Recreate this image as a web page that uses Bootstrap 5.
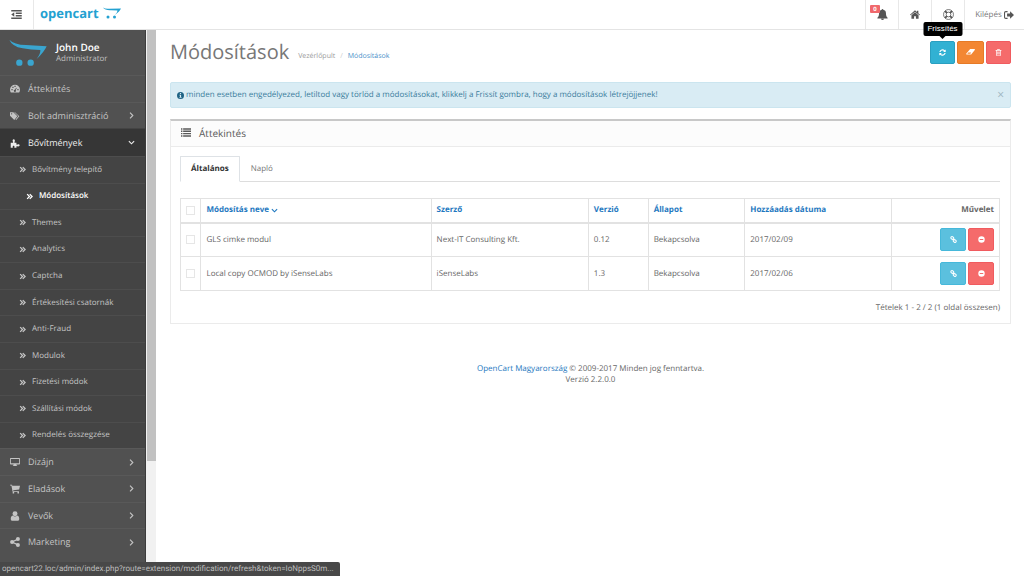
<!DOCTYPE html>
<html lang="hu">
<head>
<meta charset="utf-8">
<meta name="viewport" content="width=device-width, initial-scale=1">
<title>Módosítások</title>
<link href="https://cdn.jsdelivr.net/npm/bootstrap@5.3.0/dist/css/bootstrap.min.css" rel="stylesheet">
<style>
body{font:8px/12px "Open Sans",sans-serif;color:#666;background:#fff;text-rendering:geometricPrecision}
a{text-decoration:none;color:#1e78c0}
svg{fill:currentColor;flex:none}
.ico{width:10px;height:10px}
.ico-sm{width:7px;height:7px}
.topbar{height:30px;border-bottom:1px solid #e4e4e4}
.topbar .cell{display:flex;align-items:center;justify-content:center;color:#555;border:0 solid #e8e8e8;background:none;padding:0}
.toggle-btn{width:34px;border-right-width:1px!important}
.icon-cell{width:33px;border-left-width:1px!important;position:relative}
.exit-cell{width:60px;border-left-width:1px!important;gap:2px;color:#777!important}
.exit-cell svg{color:#555}
.brand{font-size:13px;line-height:16px;font-weight:700;color:#23a1d1;padding:0 0 3px 6px}
.count{position:absolute;left:4px;top:5px;width:10px;height:8px;font-size:6px;line-height:8px;font-weight:700;background:#f0686c;color:#fff;border-radius:1px;text-align:center}
.shell{height:calc(100vh - 30px)}
.side{width:146px;background:#515151;color:#c4c4c4;border-right:1px solid #3c3c3c}
.side a{color:inherit}
.profile{height:45px;padding:0 10px 0 9px;gap:8px}
.profile svg{color:#3aa5cf}
.profile strong{display:block;font-size:10px;line-height:13px;font-weight:600;color:#fff}
.profile small{display:block;font-size:8px;line-height:10px;color:#c0c0c0}
.menu{padding-bottom:21px}
.menu ul,.menu{list-style:none;margin:0;padding-left:0}
.menu li{flex:1 1 0}
.menu li.group-open{flex:12 1 0}
.menu .subs{flex:11 1 0;background:#444}
.menu a{display:flex;align-items:center;height:100%;font-size:9px;border-top:1px solid #595959;padding:0 10px}
.menu a .ico{margin-right:8px}
.menu a .arrow{margin-left:auto}
.menu .group-open>a{flex:1 1 0;height:auto;background:#363636;color:#eee;border-color:#444}
.menu .subs a{font-size:8px;padding-left:19px;gap:6px;border-color:#4d4d4d}
.menu .subs a.current{color:#fff;font-weight:600;padding-left:26px}
.track{width:10px;background:#f1f1f1;border-left:1px solid #f1f1f1}
.thumb{height:79%;background:#c1c1c1}
.page{padding:9px 13px 0 14px}
.title{font-size:20px;line-height:26px;color:#777;font-weight:400;margin:0}
.crumbs{margin:0 0 0 9px;padding-top:9px;--bs-breadcrumb-item-padding-x:5px;--bs-breadcrumb-divider-color:#ccc;font-size:7px}
.crumbs a{color:#999}
.crumbs .now a{color:#4a8fc9}
.btn-row{gap:2px}
.sq{width:26px;height:23px;padding:0;display:inline-flex;align-items:center;justify-content:center;border-radius:2px;color:#fff;position:relative}
.btn-row.tools .sq{width:25px}
.sq:hover{color:#fff}
.b-refresh{background:#31b1d3;border-color:#2a9fc0}
.btn-row .sq.b-clear{background:#f38733;border-color:#e67a26;width:27px}
.b-del{background:#f56b6b;border-color:#f05b5f}
.b-link{background:#5bc0de;border-color:#46b8da}
.tip{position:absolute;bottom:27px;left:50%;transform:translateX(-50%);width:39px;height:14px;background:#000;border-radius:2px;font:8px/14px "Liberation Sans",sans-serif;color:#fff}
.tip::after{content:"";position:absolute;top:14px;left:16px;border:3px solid transparent;border-top-color:#000}
.note{margin:17px 0 11px;padding:0 6px;height:26px;background:#d9ecf4;border:1px solid #cbe5ef;border-radius:2px;color:#3a7c9c;gap:2px}
.note svg{color:#1f6384}
.note button{background:none;border:0;padding:0;color:#9db4bf;font-size:12px;line-height:12px}
.panel{border:1px solid #ebebeb;border-top:2px solid #c8c8c8}
.panel-top{height:26px;background:#fcfcfc;border-bottom:1px solid #ebebeb;padding:0 10px 2px;gap:8px;font-size:10px;color:#595959}
.panel-in{padding:9px 10px 9px 9px}
.nav-tabs{--bs-nav-link-padding-x:10px;--bs-nav-link-padding-y:6px;--bs-nav-tabs-border-color:#ddd;--bs-nav-tabs-border-radius:1px;margin-bottom:16px}
.nav-tabs .nav-link{font-size:8px;color:#777}
.nav-tabs .nav-link.active{font-weight:700;color:#333}
.grid-tbl{table-layout:fixed;margin:0 0 11px;color:#666;border-color:#e2e2e2;--bs-table-color:#666}
.grid-tbl>:not(caption)>*>*{padding:0 5px;height:34px;vertical-align:middle}
.grid-tbl>thead>tr>th{height:24px;border-bottom-width:2px}
.grid-tbl td.pick,.grid-tbl th.pick{padding:0!important;text-align:center}
.pick input{appearance:none;width:9px;height:9px;border:1px solid #e6e6e6;background:#fff;display:block;margin:0 auto}
.c1{width:2.5%}.c2{width:28.1%}.c3{width:19.2%}.c4{width:7.3%}.c5{width:11.8%}.c6{width:17.9%}.c7{width:13.2%}
.foot{margin-top:39px;line-height:11px}
.status{position:fixed;left:0;bottom:0;width:340px;height:14px;background:#484848;color:#bdbdbd;border-radius:0 2px 0 0;font-family:Roboto,sans-serif;line-height:14px;padding-left:2px;white-space:nowrap}
</style>
</head>
<body>
<svg class="d-none" aria-hidden="true">
<symbol id="outdent" viewBox="0 0 14 12"><path d="M0 0h14v2H0zM6 3.300h8v2H6zM6 6.700h8v2H6zM0 10h14v2H0zM0 6l4-3v6z"/></symbol>
<symbol id="bell" viewBox="0 0 14 14"><path d="M7 0a1 1 0 0 1 1 1.100c2 .4 3.400 2 3.400 4.200 0 3 .7 4.700 2.100 5.700v1H.5v-1c1.400-1 2.100-2.700 2.100-5.700C2.600 3.100 4 1.500 6 1.100A1 1 0 0 1 7 0zM5.200 12.500h3.600a1.800 1.500 0 0 1-3.600 0z"/></symbol>
<symbol id="home" viewBox="0 0 14 12"><path d="M7 0 9.700 2.400V.8h2v3.400L14 6.200l-.8 1L7 2 .8 7.200l-.8-1zM7 3l5 4.200V12H8.300V8.300H5.700V12H2V7.200z"/></symbol>
<symbol id="ring" viewBox="0 0 14 14"><g fill="none" stroke="currentColor"><circle cx="7" cy="7" r="6.300"/><circle cx="7" cy="7" r="3"/><path stroke-width="2.400" d="M2.600 2.600 5 5M9 9l2.400 2.400M11.400 2.600 9 5M5 9l-2.400 2.400"/></g></symbol>
<symbol id="exit" viewBox="0 0 14 12"><path d="M5 .5H2.500A2.500 2.500 0 0 0 0 3v6a2.500 2.500 0 0 0 2.500 2.500H5V10H2.500a1 1 0 0 1-1-1V3a1 1 0 0 1 1-1H5zM14 6 8.500.8v3H4.300v4.400h4.200v3z"/></symbol>
<symbol id="dash" viewBox="0 0 14 12"><path fill-rule="evenodd" d="M7 0a7 7 0 0 1 7 7c0 1.600-.4 2.900-1.200 4H1.200A7 7 0 0 1 0 7a7 7 0 0 1 7-7zM2 6v1.700h1.700V6zM3.300 3v1.700H5V3zM6.200 1.500v1.700h1.700V1.500zM10.300 6v1.700H12V6zM8.700 4.200 6.700 7a1.500 1.500 0 1 0 1.200.4l1.700-2.800z"/></symbol>
<symbol id="tags" viewBox="0 0 15 13"><path fill-rule="evenodd" d="M0 1h5l6 6-4.600 5.500L0 6zM2.400 2.200a1 1 0 1 0 .1 2 1 1 0 0 0-.1-2z"/><path d="M6.300 1h1.200l6.500 6-4.700 5.500-1-.8L12.500 7z"/></symbol>
<symbol id="puzzle" viewBox="0 0 14 13"><path d="M1 6h3c.6 0 .4-.8.100-1.300C3.200 3 3.800 1.300 5.200 1.300S7.300 3 6.500 4.600C6.200 5.200 6 6 6.700 6H9v2.300c0 .8.800.6 1.500.3 1.600-.8 3 0 3 1.200s-1.400 2.200-3 1.400c-.8-.4-1.500-.3-1.500.4V13H6.500c-.7 0-.5-.8-.3-1.300.2-.9-.4-1.400-1.200-1.400s-1.300.5-1.100 1.400c.2.500.3 1.300-.4 1.300H1z"/></symbol>
<symbol id="screen" viewBox="0 0 14 12"><path fill-rule="evenodd" d="M1 .5h12a1 1 0 0 1 1 1v7a1 1 0 0 1-1 1H9v1l1 .5v.7H4V11l1-.5v-1H1a1 1 0 0 1-1-1v-7a1 1 0 0 1 1-1zM1.200 1.700v6.100h11.600V1.700z"/></symbol>
<symbol id="basket" viewBox="0 0 14 13"><path d="M0 .5h2.800L3.200 2H14l-1.200 5.200-8.300 1 .2 1H12.500v1.100H3.600L2 1.700H0z"/><circle cx="4.800" cy="11.700" r="1.200"/><circle cx="11.500" cy="11.700" r="1.200"/></symbol>
<symbol id="person" viewBox="0 0 12 13"><circle cx="6" cy="3.500" r="3.200"/><path d="M3.300 6c1.500 1.500 3.900 1.500 5.400 0C11 6.300 11.500 8.500 11.500 10.500c0 1.500-.8 2.300-2 2.300h-7c-1.200 0-2-.8-2-2.300C.5 8.500 1 6.300 3.300 6z"/></symbol>
<symbol id="share" viewBox="0 0 12 12"><circle cx="2.500" cy="6" r="2.400"/><circle cx="9.500" cy="2.500" r="2.400"/><circle cx="9.500" cy="9.500" r="2.400"/><path fill="none" stroke="currentColor" stroke-width="1.500" d="M9.500 2.500 2.500 6l7 3.500"/></symbol>
<symbol id="right" viewBox="0 0 8 8"><path fill="none" stroke="currentColor" stroke-width="1.300" d="m2.300.8 3.200 3.200-3.200 3.200"/></symbol>
<symbol id="down" viewBox="0 0 8 8"><path fill="none" stroke="currentColor" stroke-width="1.300" d="m1 2.500 3 3 3-3"/></symbol>
<symbol id="dbl" viewBox="0 0 8 8"><path fill="none" stroke="currentColor" stroke-width="1.500" d="m1.300 1.300 2.700 2.700-2.700 2.700M4.300 1.300l2.700 2.700-2.700 2.700"/></symbol>
<symbol id="refresh" viewBox="0 0 12 12"><path d="M.5 5A5.600 5.600 0 0 1 10 2.100L11.500.7V5H7.200l1.400-1.400A3.600 3.600 0 0 0 2.600 5zM11.500 7A5.600 5.600 0 0 1 2 9.900L.5 11.300V7h4.300L3.400 8.400a3.600 3.600 0 0 0 6-1.400z"/></symbol>
<symbol id="eraser" viewBox="0 0 14 12"><path fill-rule="evenodd" d="M6.500 1.500H13c.8 0 1.200.8.700 1.400L8 10H1C.2 10-.2 9.200.3 8.600zM3.400 6.800 2 8.700h4.700L8 6.800z"/></symbol>
<symbol id="trash" viewBox="0 0 12 12"><path fill-rule="evenodd" d="M4 .5h4l.6 1.300H11V3h-.8v7.500c0 .7-.4 1.200-1 1.200H2.800c-.6 0-1-.5-1-1.200V3H1V1.800h2.400zM3 3v7.500h6V3zM4 4.300h1v5H4zM5.600 4.300h.9v5h-.9zM7.200 4.300h.9v5h-.9z"/></symbol>
<symbol id="chain" viewBox="0 0 12 12"><g fill="none" stroke="currentColor" stroke-width="1.800"><rect x="1.300" y="1.500" width="5.500" height="4" rx="2" transform="rotate(45 4 3.500)"/><rect x="5.300" y="6.500" width="5.500" height="4" rx="2" transform="rotate(45 8 8.500)"/><path d="m4.500 4.500 3 3"/></g></symbol>
<symbol id="minus" viewBox="0 0 12 12"><path fill-rule="evenodd" d="M6 .5a5.500 5.500 0 1 0 0 11 5.500 5.500 0 0 0 0-11zM3 5h6v2H3z"/></symbol>
<symbol id="info" viewBox="0 0 12 12"><path fill-rule="evenodd" d="M6 0a6 6 0 1 0 0 12A6 6 0 0 0 6 0zM5 1.700h2v1.700H5zM4.200 4.500H7v4h.8V10H4.200V8.500H5V6h-.8z"/></symbol>
<symbol id="list" viewBox="0 0 14 12"><path d="M0 0h2v2H0zM3 0h11v2H3zM0 3.300h2v2H0zM3 3.300h11v2H3zM0 6.600h2v2H0zM3 6.600h11v2H3zM0 10h2v2H0zM3 10h11v2H3z"/></symbol>
</svg>

<header class="topbar d-flex">
  <button class="cell toggle-btn" type="button" aria-label="Menü"><svg width="11" height="9"><use href="#outdent"/></svg></button>
  <a class="brand d-flex align-items-center me-auto" href="#">opencart<svg class="ms-1" width="18" height="12" viewBox="0 0 18 12"><path d="M0 .5Q2 2 6 1.700L18 1.500Q17 4 12 8q2.500-3 2.500-4.500Q12 3.200 8 3.200 2 3.500 0 .5z"/><circle cx="5" cy="10" r="1.500"/><circle cx="11.500" cy="10" r="1.500"/></svg></a>
  <a class="cell icon-cell" href="#" aria-label="Értesítések"><svg width="11" height="11"><use href="#bell"/></svg><span class="count">0</span></a>
  <a class="cell icon-cell" href="#" aria-label="Kezdőlap"><svg width="10" height="9"><use href="#home"/></svg></a>
  <a class="cell icon-cell" href="#" aria-label="Súgó"><svg width="11" height="11"><use href="#ring"/></svg></a>
  <a class="cell exit-cell" href="#">Kilépés<svg class="ico"><use href="#exit"/></svg></a>
</header>

<div class="shell d-flex">
  <aside class="side d-flex flex-column flex-shrink-0">
    <div class="profile d-flex align-items-center">
      <svg width="39" height="28" viewBox="29 120 117 84"><path d="M30 122q14 15 50 16l62 4q-8 18-30 38 12-16 11-27-28 0-53-5-32-6-40-26z"/><circle cx="60" cy="191" r="9.500"/><circle cx="94" cy="191" r="9.500"/></svg>
      <div><strong>John Doe</strong><small>Administrator</small></div>
    </div>
    <ul class="menu d-flex flex-column flex-grow-1">
      <li><a href="#"><svg class="ico"><use href="#dash"/></svg>Áttekintés</a></li>
      <li><a href="#"><svg class="ico"><use href="#tags"/></svg>Bolt adminisztráció<svg class="ico-sm arrow"><use href="#right"/></svg></a></li>
      <li class="group-open d-flex flex-column"><a href="#"><svg class="ico"><use href="#puzzle"/></svg>Bővítmények<svg class="ico-sm arrow"><use href="#down"/></svg></a>
        <ul class="subs d-flex flex-column">
          <li><a href="#"><svg class="ico-sm"><use href="#dbl"/></svg>Bővítmény telepítő</a></li>
          <li><a class="current" href="#"><svg class="ico-sm"><use href="#dbl"/></svg>Módosítások</a></li>
          <li><a href="#"><svg class="ico-sm"><use href="#dbl"/></svg>Themes</a></li>
          <li><a href="#"><svg class="ico-sm"><use href="#dbl"/></svg>Analytics</a></li>
          <li><a href="#"><svg class="ico-sm"><use href="#dbl"/></svg>Captcha</a></li>
          <li><a href="#"><svg class="ico-sm"><use href="#dbl"/></svg>Értékesítési csatornák</a></li>
          <li><a href="#"><svg class="ico-sm"><use href="#dbl"/></svg>Anti-Fraud</a></li>
          <li><a href="#"><svg class="ico-sm"><use href="#dbl"/></svg>Modulok</a></li>
          <li><a href="#"><svg class="ico-sm"><use href="#dbl"/></svg>Fizetési módok</a></li>
          <li><a href="#"><svg class="ico-sm"><use href="#dbl"/></svg>Szállítási módok</a></li>
          <li><a href="#"><svg class="ico-sm"><use href="#dbl"/></svg>Rendelés összegzése</a></li>
        </ul></li>
      <li><a href="#"><svg class="ico"><use href="#screen"/></svg>Dizájn<svg class="ico-sm arrow"><use href="#right"/></svg></a></li>
      <li><a href="#"><svg class="ico"><use href="#basket"/></svg>Eladások<svg class="ico-sm arrow"><use href="#right"/></svg></a></li>
      <li><a href="#"><svg class="ico"><use href="#person"/></svg>Vevők<svg class="ico-sm arrow"><use href="#right"/></svg></a></li>
      <li><a href="#"><svg class="ico"><use href="#share"/></svg>Marketing<svg class="ico-sm arrow"><use href="#right"/></svg></a></li>
    </ul>
  </aside>
  <div class="track flex-shrink-0"><div class="thumb"></div></div>

  <main class="page flex-grow-1">
    <div class="d-flex align-items-center">
      <h1 class="title">Módosítások</h1>
      <nav class="me-auto"><ol class="breadcrumb crumbs"><li class="breadcrumb-item"><a href="#">Vezérlőpult</a></li><li class="breadcrumb-item now"><a href="#">Módosítások</a></li></ol></nav>
      <div class="btn-row tools d-flex">
        <button class="btn sq b-refresh" type="button" aria-label="Frissítés"><svg class="ico-sm"><use href="#refresh"/></svg><span class="tip">Frissítés</span></button>
        <button class="btn sq b-clear" type="button" aria-label="Ürítés"><svg width="9" height="8"><use href="#eraser"/></svg></button>
        <button class="btn sq b-del" type="button" aria-label="Törlés"><svg class="ico-sm"><use href="#trash"/></svg></button>
      </div>
    </div>

    <div class="note d-flex align-items-center" role="alert">
      <svg width="7" height="7"><use href="#info"/></svg><span class="me-auto">minden esetben engedélyezed, letiltod vagy törlöd a módosításokat, klikkelj a Frissít gombra, hogy a módosítások létrejöjjenek!</span>
      <button type="button" aria-label="Bezárás">×</button>
    </div>

    <section class="panel">
      <div class="panel-top d-flex align-items-center"><svg width="10" height="9"><use href="#list"/></svg>Áttekintés</div>
      <div class="panel-in">
        <ul class="nav nav-tabs">
          <li class="nav-item"><a class="nav-link active" href="#">Általános</a></li>
          <li class="nav-item"><a class="nav-link" href="#">Napló</a></li>
        </ul>
        <table class="table table-bordered grid-tbl">
          <colgroup><col class="c1"><col class="c2"><col class="c3"><col class="c4"><col class="c5"><col class="c6"><col class="c7"></colgroup>
          <thead><tr>
            <th class="pick"><input type="checkbox" aria-label="Összes kijelölése"></th>
            <th><a href="#">Módosítás neve <svg width="7" height="7"><use href="#down"/></svg></a></th>
            <th><a href="#">Szerző</a></th><th><a href="#">Verzió</a></th><th><a href="#">Állapot</a></th><th><a href="#">Hozzáadás dátuma</a></th><th class="text-end">Művelet</th>
          </tr></thead>
          <tbody>
            <tr><td class="pick"><input type="checkbox" aria-label="GLS cimke modul"></td><td>GLS cimke modul</td><td>Next-IT Consulting Kft.</td><td>0.12</td><td>Bekapcsolva</td><td>2017/02/09</td>
              <td><div class="btn-row d-flex justify-content-end"><button class="btn sq b-link" type="button" aria-label="Link"><svg class="ico-sm"><use href="#chain"/></svg></button><button class="btn sq b-del" type="button" aria-label="Letiltás"><svg class="ico-sm"><use href="#minus"/></svg></button></div></td></tr>
            <tr><td class="pick"><input type="checkbox" aria-label="Local copy OCMOD"></td><td>Local copy OCMOD by iSenseLabs</td><td>iSenseLabs</td><td>1.3</td><td>Bekapcsolva</td><td>2017/02/06</td>
              <td><div class="btn-row d-flex justify-content-end"><button class="btn sq b-link" type="button" aria-label="Link"><svg class="ico-sm"><use href="#chain"/></svg></button><button class="btn sq b-del" type="button" aria-label="Letiltás"><svg class="ico-sm"><use href="#minus"/></svg></button></div></td></tr>
          </tbody>
        </table>
        <div class="text-end">Tételek 1 - 2 / 2 (1 oldal összesen)</div>
      </div>
    </section>

    <footer class="foot text-center"><a href="#">OpenCart Magyarország</a> © 2009-2017 Minden jog fenntartva.<br>Verzió 2.2.0.0</footer>
  </main>
</div>
<div class="status">opencart22.loc/admin/index.php?route=extension/modification/refresh&amp;token=IoNppsS0m...</div>
<script src="https://cdn.jsdelivr.net/npm/bootstrap@5.3.0/dist/js/bootstrap.bundle.min.js"></script>
</body>
</html>
